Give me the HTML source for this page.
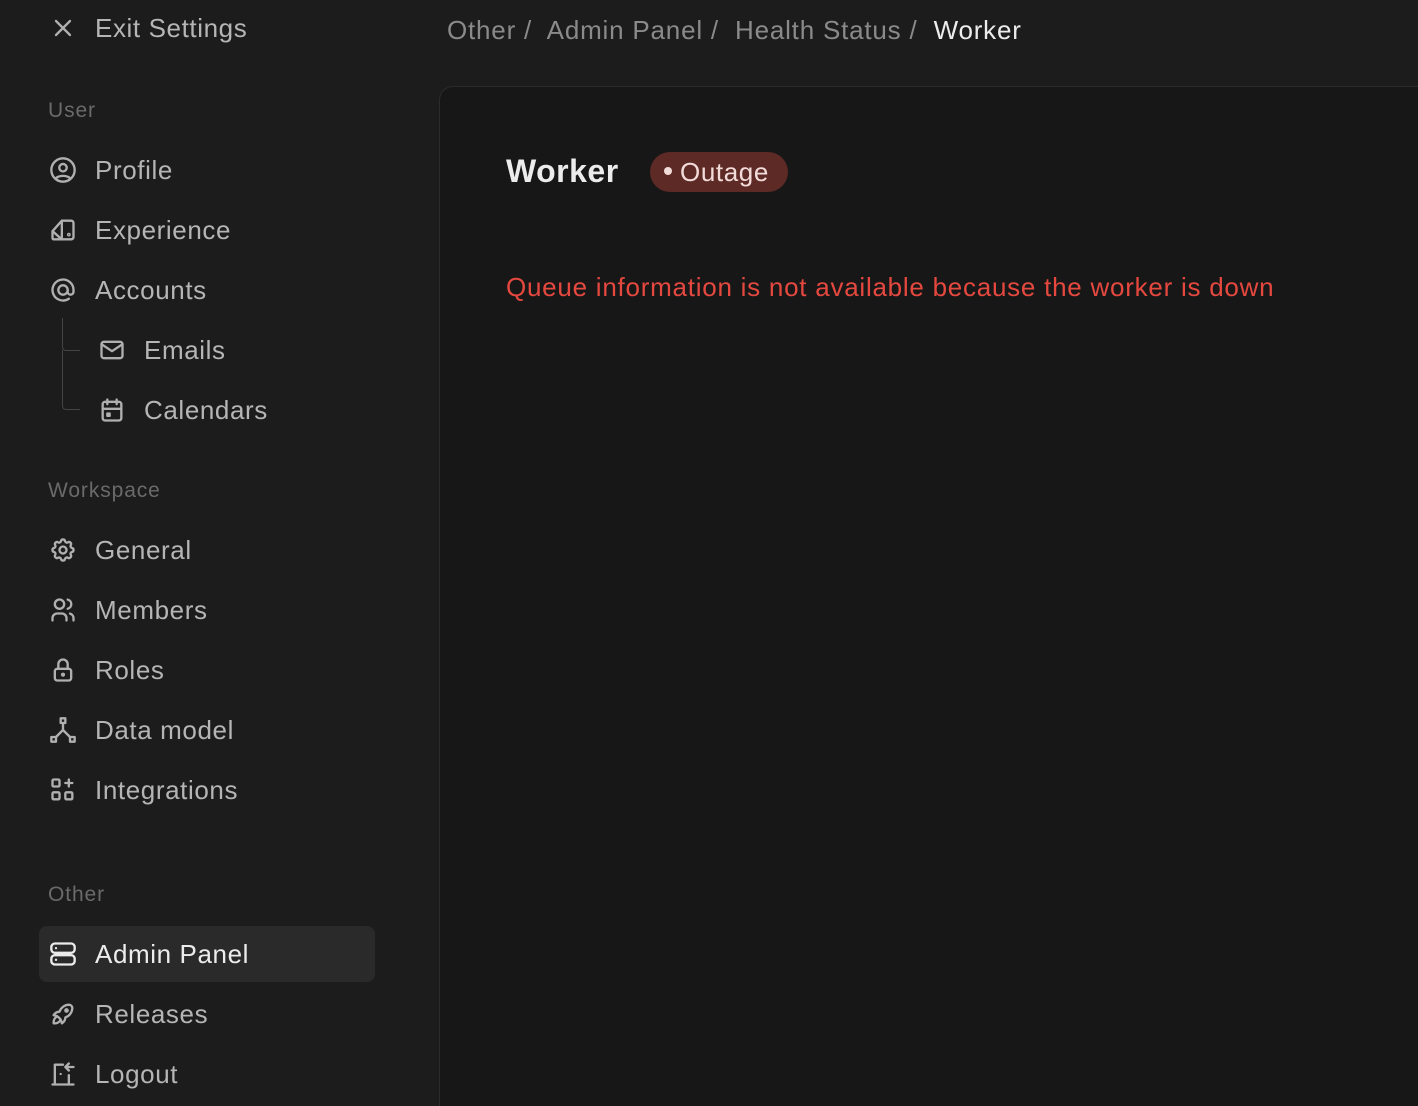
<!DOCTYPE html>
<html style="overflow:hidden"><head><meta charset="utf-8"><style>
*{margin:0;padding:0;box-sizing:border-box}
html,body{width:1418px;height:1106px}
body{background:#1c1c1c;font-family:"Liberation Sans",sans-serif;overflow:hidden;position:relative}
.t{position:absolute;white-space:nowrap}
.item{position:absolute;left:95px;font-size:26px;color:#b5b5b5;line-height:30px;letter-spacing:0.6px;white-space:nowrap}
.lab{position:absolute;left:48px;font-size:21px;color:#6a6a6a;letter-spacing:0.9px}
svg.i{position:absolute;width:28px;height:28px;fill:none;stroke:#b0b0b0;stroke-width:2;stroke-linecap:round;stroke-linejoin:round}
</style></head><body>
<svg class="i" style="left:49px;top:14px" viewBox="0 0 24 24"><path d="M6 6l12 12M18 6L6 18"/></svg>
<div class="item" style="top:13px">Exit Settings</div>
<div class="t" style="left:447px;top:15px;font-size:26px;color:#8a8a8a;letter-spacing:0.8px">Other /&nbsp; Admin Panel /&nbsp; Health Status /&nbsp; <span style="color:#ececec">Worker</span></div>

<div class="lab" style="top:99px">User</div>
<svg class="i" style="left:49px;top:156px" viewBox="0 0 24 24"><circle cx="12" cy="12" r="10"/><circle cx="12" cy="10" r="3.2"/><path d="M6.2 18.8a7 4 0 0 1 11.6 0"/></svg>
<div class="item" style="top:155px">Profile</div>
<svg class="i" style="left:49px;top:216px" viewBox="0 0 24 24"><path d="M3 19v-6l8-9v16H4a1 1 0 0 1-1-1zM3 13l8 7M11 4h8a2 2 0 0 1 2 2v12a2 2 0 0 1-2 2h-8"/><circle cx="17" cy="16" r=".6"/></svg>
<div class="item" style="top:215px">Experience</div>
<svg class="i" style="left:49px;top:276px" viewBox="0 0 24 24"><circle cx="12" cy="12" r="4"/><path d="M16 12v1.5a2.5 2.5 0 0 0 5 0V12a9 9 0 1 0-4 7.5"/></svg>
<div class="item" style="top:275px">Accounts</div>
<div style="position:absolute;left:62px;top:318px;width:18px;height:33px;border-left:1.5px solid #444;border-bottom:1.5px solid #444;border-bottom-left-radius:4px"></div>
<div style="position:absolute;left:62px;top:350px;width:18px;height:60px;border-left:1.5px solid #444;border-bottom:1.5px solid #444;border-bottom-left-radius:4px"></div>
<svg class="i" style="left:98px;top:336px" viewBox="0 0 24 24"><rect x="3" y="5" width="18" height="14" rx="2"/><path d="M3 7l9 6 9-6"/></svg>
<div class="item" style="left:144px;top:335px">Emails</div>
<svg class="i" style="left:98px;top:396px" viewBox="0 0 24 24"><rect x="4" y="5" width="16" height="16" rx="2"/><path d="M16 3v4M8 3v4M4 11h16"/><rect x="8" y="15" width="2" height="2"/></svg>
<div class="item" style="left:144px;top:395px">Calendars</div>

<div class="lab" style="top:479px">Workspace</div>
<svg class="i" style="left:49px;top:536px" viewBox="0 0 24 24"><path d="M10.3 4.3c.4-1.8 3-1.8 3.4 0a1.7 1.7 0 0 0 2.6 1.1c1.5-.9 3.3.8 2.4 2.4a1.7 1.7 0 0 0 1 2.5c1.8.4 1.8 3 0 3.4a1.7 1.7 0 0 0-1 2.6c.9 1.5-.9 3.3-2.4 2.4a1.7 1.7 0 0 0-2.6 1c-.4 1.8-3 1.8-3.4 0a1.7 1.7 0 0 0-2.6-1c-1.5.9-3.3-.9-2.4-2.4a1.7 1.7 0 0 0-1-2.6c-1.8-.4-1.8-3 0-3.4a1.7 1.7 0 0 0 1-2.5c-.9-1.6.9-3.3 2.4-2.4a1.7 1.7 0 0 0 2.6-1.1z"/><circle cx="12" cy="12" r="3"/></svg>
<div class="item" style="top:535px">General</div>
<svg class="i" style="left:49px;top:596px" viewBox="0 0 24 24"><circle cx="9" cy="7" r="4"/><path d="M3 21v-2a4 4 0 0 1 4-4h4a4 4 0 0 1 4 4v2M16 3.1a4 4 0 0 1 0 7.8M21 21v-2a4 4 0 0 0-3-3.9"/></svg>
<div class="item" style="top:595px">Members</div>
<svg class="i" style="left:49px;top:656px" viewBox="0 0 24 24"><rect x="5" y="11" width="14" height="10" rx="2"/><circle cx="12" cy="16" r=".8"/><path d="M8 11V7a4 4 0 0 1 8 0v4"/></svg>
<div class="item" style="top:655px">Roles</div>
<svg class="i" style="left:49px;top:716px" viewBox="0 0 24 24"><rect x="10" y="2" width="4" height="4"/><rect x="2" y="18" width="4" height="4"/><rect x="18" y="18" width="4" height="4"/><path d="M12 6v6M6 18l6-6 6 6"/></svg>
<div class="item" style="top:715px">Data model</div>
<svg class="i" style="left:49px;top:776px" viewBox="0 0 24 24"><rect x="3" y="3" width="6" height="6" rx="1"/><rect x="3" y="14" width="6" height="6" rx="1"/><rect x="14" y="14" width="6" height="6" rx="1"/><path d="M14 6h6M17 3v6"/></svg>
<div class="item" style="top:775px">Integrations</div>

<div class="lab" style="top:883px">Other</div>
<div style="position:absolute;left:39px;top:926px;width:336px;height:56px;background:#2a2a2a;border-radius:8px"></div>
<svg class="i" style="left:49px;top:940px;stroke:#ececec" viewBox="0 0 24 24"><rect x="2" y="3" width="20" height="8" rx="3"/><rect x="2" y="13" width="20" height="8" rx="3"/><path d="M6 7h.01M6 17h.01"/></svg>
<div class="item" style="top:939px;color:#ececec">Admin Panel</div>
<svg class="i" style="left:49px;top:1000px" viewBox="0 0 24 24"><path d="M4 13a8 8 0 0 1 7 7 6 6 0 0 0 3-5 9 9 0 0 0 6-8 3 3 0 0 0-3-3 9 9 0 0 0-8 6 6 6 0 0 0-5 3"/><path d="M7 14a6 6 0 0 0-3 6 6 6 0 0 0 6-3"/><circle cx="15" cy="9" r="1"/></svg>
<div class="item" style="top:999px">Releases</div>
<svg class="i" style="left:49px;top:1060px" viewBox="0 0 24 24"><path d="M3 21h18M5 21V4h7M17 13v8M14 6h7M17 3l-3 3 3 3M10 12v.01"/></svg>
<div class="item" style="top:1059px">Logout</div>

<div style="position:absolute;left:439px;top:86px;width:979px;height:1020px;background:#171717;border:1.5px solid #2b2b2b;border-right:none;border-bottom:none;border-top-left-radius:14px"></div>
<div class="t" style="left:506px;top:153px;font-size:32px;font-weight:bold;color:#ececec;letter-spacing:0.5px">Worker</div>
<div class="t" style="left:650px;top:152px;width:138px;height:40px;background:#5e2a26;border-radius:20px;color:#f2dcda;font-size:26px;line-height:40px;padding-left:14px;letter-spacing:0.6px"><span style="display:inline-block;width:8px;height:8px;border-radius:50%;background:#f2dcda;vertical-align:middle;margin-right:8px;position:relative;top:-3px"></span>Outage</div>
<div class="t" style="left:506px;top:272px;font-size:26px;color:#e5483f;letter-spacing:0.75px">Queue information is not available because the worker is down</div>
</body></html>
